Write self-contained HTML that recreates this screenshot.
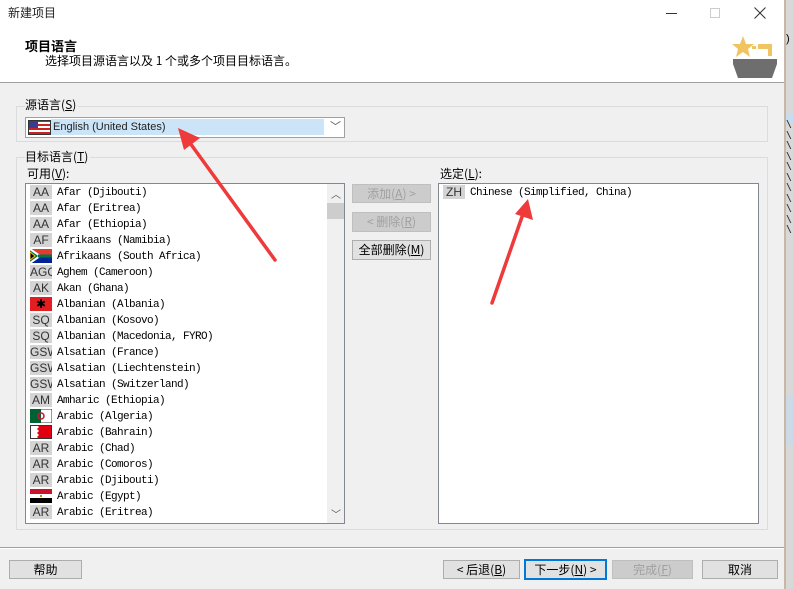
<!DOCTYPE html>
<html><head><meta charset="utf-8"><style>
*{margin:0;padding:0;box-sizing:border-box}
body{width:793px;height:589px;overflow:hidden;background:#f0f0f0;position:relative;font-family:"Liberation Sans","Noto Sans CJK SC",sans-serif;font-size:12px;color:#000}
.a{position:absolute}
.cjk{font-family:"Noto Sans CJK SC","WenQuanYi Zen Hei",sans-serif}
.btn{position:absolute;background:#e1e1e1;border:1px solid #adadad;text-align:center;font-size:12px;line-height:17px;font-family:"Noto Sans CJK SC",sans-serif}
.dis{color:#a0a0a0;background:#cccccc;border-color:#bfbfbf}
.row{position:absolute;left:3px;height:16px;width:300px}
.ic{position:absolute;left:1px;top:1px;width:22px;height:14px;background:#d4d4d4;color:#333;font:12px/15px "Liberation Sans",sans-serif;text-align:center;overflow:hidden;white-space:nowrap}
.tx{position:absolute;left:28px;top:1px;font:11px/16px "Liberation Mono",monospace;letter-spacing:-0.6px;white-space:nowrap}
.grp{position:absolute;border:1px solid #dcdcdc}
.lbl{background:#f0f0f0;padding-right:2px}
</style></head><body>
<div class="a" style="left:0;top:0;width:784px;height:82px;background:#fff"></div>
<div class="a" style="left:0;top:82px;width:784px;height:1px;background:#a0a0a0"></div>
<div class="a cjk" style="left:8px;top:4px;font-size:12px;color:#222">新建项目</div>
<div class="a" style="left:666px;top:13px;width:11px;height:1px;background:#333"></div>
<div class="a" style="left:710px;top:8px;width:10px;height:10px;border:1px solid #ccc"></div>
<svg class="a" style="left:754px;top:7px" width="12" height="12"><path d="M0.5 0.5L11.5 11.5M11.5 0.5L0.5 11.5" stroke="#333" stroke-width="1"/></svg>
<div class="a cjk" style="left:25px;top:36px;font-weight:bold;font-size:13px">项目语言</div>
<div class="a cjk" style="left:45px;top:52px;font-size:12px">选择项目源语言以及 1 个或多个项目目标语言。</div>
<svg class="a" style="left:732px;top:36px" width="46" height="44"><polygon points="11,0 14,8 22,8 16,13 18,21 11,16 4,21 6,13 0,8 8,8" fill="#f0c460"/><rect x="20" y="10" width="4" height="3" fill="#f0c460"/><path d="M26 8h14v12h-4v-7h-10z" fill="#f0c460"/><polygon points="1,23 45,23 45,28 40,42 6,42 1,28" fill="#6e6e6e"/></svg>
<div class="a" style="left:784px;top:0;width:9px;height:589px;background:#d8d8d8;border-left:2px solid #c9b7a6"></div>
<div class="a" style="left:786px;top:33px;font-size:11px">)</div>
<div class="a" style="left:786px;top:113px;width:7px;height:10px;background:#c8dcef"></div>
<div class="a" style="left:786px;top:120px;width:7px;height:115px;font:10px/10.5px monospace;color:#222">\<br>\<br>\<br>\<br>\<br>\<br>\<br>\<br>\<br>\<br>\</div>
<div class="a" style="left:786px;top:395px;width:7px;height:50px;background:#ccd9e6"></div>

<div class="grp" style="left:16px;top:106px;width:752px;height:36px"></div>
<div class="a cjk lbl" style="left:25px;top:96px">源语言(<u>S</u>)</div>
<div class="a" style="left:25px;top:117px;width:320px;height:21px;background:#fff;border:1px solid #a0a0a0"></div>
<div class="a" style="left:51px;top:119px;width:273px;height:16px;background:#cce4f7"></div>
<svg class="a" style="left:28px;top:120px" width="23" height="15"><rect width="23" height="15" fill="#fff"/><g fill="#c22"><rect y="0" width="23" height="2"/><rect y="4" width="23" height="2"/><rect y="8" width="23" height="2"/><rect y="12" width="23" height="2"/></g><rect width="10" height="8" fill="#3b3b8f"/><rect x=".5" y=".5" width="22" height="14" fill="none" stroke="#333"/></svg>
<div class="a" style="left:53px;top:120px;font-size:11px;line-height:14px;color:#222">English (United States)</div>
<div class="a" style="left:330px;top:118px;font-size:11px;color:#555">﹀</div>

<div class="grp" style="left:16px;top:157px;width:752px;height:373px"></div>
<div class="a cjk lbl" style="left:25px;top:148px">目标语言(<u>T</u>)</div>
<div class="a cjk" style="left:27px;top:165px">可用(<u>V</u>):</div>
<div class="a cjk" style="left:440px;top:165px">选定(<u>L</u>):</div>

<div class="a" style="left:25px;top:183px;width:320px;height:341px;background:#fff;border:1px solid #828790;overflow:hidden">
<div class="a" style="left:301px;top:0;width:17px;height:339px;background:#f0f0f0"></div>
<div class="a" style="left:301px;top:19px;width:17px;height:16px;background:#cdcdcd"></div>
<div class="a" style="left:305px;top:2px;font-size:10px;color:#555">︿</div>
<div class="a" style="left:305px;top:322px;font-size:10px;color:#555">﹀</div>
<div class="row" style="top:0"><div class="ic">AA</div><div class="tx">Afar (Djibouti)</div></div>
<div class="row" style="top:16px"><div class="ic">AA</div><div class="tx">Afar (Eritrea)</div></div>
<div class="row" style="top:32px"><div class="ic">AA</div><div class="tx">Afar (Ethiopia)</div></div>
<div class="row" style="top:48px"><div class="ic">AF</div><div class="tx">Afrikaans (Namibia)</div></div>
<div class="row" style="top:64px"><svg class="ic" style="background:none" width="22" height="14"><rect width="22" height="7" fill="#e03c31"/><rect y="7" width="22" height="7" fill="#002395"/><path d="M0 0L10 7L0 14" fill="#007749" stroke="#fff" stroke-width="2"/><path d="M0 3L5 7L0 11z" fill="#000" stroke="#ffb612" stroke-width="1"/><rect x="8" y="5.5" width="14" height="3" fill="#007749"/></svg><div class="tx">Afrikaans (South Africa)</div></div>
<div class="row" style="top:80px"><div class="ic">AGQ</div><div class="tx">Aghem (Cameroon)</div></div>
<div class="row" style="top:96px"><div class="ic">AK</div><div class="tx">Akan (Ghana)</div></div>
<div class="row" style="top:112px"><div class="ic" style="background:#e41e20;color:#000">✱</div><div class="tx">Albanian (Albania)</div></div>
<div class="row" style="top:128px"><div class="ic">SQ</div><div class="tx">Albanian (Kosovo)</div></div>
<div class="row" style="top:144px"><div class="ic">SQ</div><div class="tx">Albanian (Macedonia, FYRO)</div></div>
<div class="row" style="top:160px"><div class="ic">GSW</div><div class="tx">Alsatian (France)</div></div>
<div class="row" style="top:176px"><div class="ic">GSW</div><div class="tx">Alsatian (Liechtenstein)</div></div>
<div class="row" style="top:192px"><div class="ic">GSW</div><div class="tx">Alsatian (Switzerland)</div></div>
<div class="row" style="top:208px"><div class="ic">AM</div><div class="tx">Amharic (Ethiopia)</div></div>
<div class="row" style="top:224px"><svg class="ic" style="background:none" width="22" height="14"><rect width="22" height="14" fill="#fff" stroke="#333"/><rect width="11" height="14" fill="#006233"/><circle cx="11" cy="7" r="3" fill="none" stroke="#d21034" stroke-width="1.5"/></svg><div class="tx">Arabic (Algeria)</div></div>
<div class="row" style="top:240px"><svg class="ic" style="background:none" width="22" height="14"><rect width="22" height="14" fill="#e10011"/><path d="M0 0H7L9 2L7 4L9 6L7 8L9 10L7 12L9 14H0z" fill="#fff"/><rect x=".5" y=".5" width="21" height="13" fill="none" stroke="#333"/></svg><div class="tx">Arabic (Bahrain)</div></div>
<div class="row" style="top:256px"><div class="ic">AR</div><div class="tx">Arabic (Chad)</div></div>
<div class="row" style="top:272px"><div class="ic">AR</div><div class="tx">Arabic (Comoros)</div></div>
<div class="row" style="top:288px"><div class="ic">AR</div><div class="tx">Arabic (Djibouti)</div></div>
<div class="row" style="top:304px"><svg class="ic" style="background:none" width="22" height="14"><rect width="22" height="5" fill="#ce1126"/><rect y="5" width="22" height="4" fill="#fff"/><rect y="9" width="22" height="5" fill="#000"/><rect x="10" y="6" width="2" height="2" fill="#c09300"/></svg><div class="tx">Arabic (Egypt)</div></div>
<div class="row" style="top:320px"><div class="ic">AR</div><div class="tx">Arabic (Eritrea)</div></div>
</div>

<div class="btn dis" style="left:352px;top:184px;width:79px;height:19px">添加(<u>A</u>) &gt;</div>
<div class="btn dis" style="left:352px;top:212px;width:79px;height:20px">&lt; 删除(<u>R</u>)</div>
<div class="btn" style="left:352px;top:240px;width:79px;height:20px">全部删除(<u>M</u>)</div>

<div class="a" style="left:438px;top:183px;width:321px;height:341px;background:#fff;border:1px solid #828790">
<div class="row" style="top:0"><div class="ic">ZH</div><div class="tx">Chinese (Simplified, China)</div></div>
</div>

<div class="a" style="left:0;top:547px;width:784px;height:1px;background:#a0a0a0"></div>
<div class="a" style="left:0;top:548px;width:784px;height:1px;background:#fff"></div>
<div class="btn" style="left:9px;top:560px;width:73px;height:19px">帮助</div>
<div class="btn" style="left:443px;top:560px;width:77px;height:19px">&lt; 后退(<u>B</u>)</div>
<div class="btn" style="left:524px;top:559px;width:83px;height:21px;border:2px solid #0078d7;line-height:17px">下一步(<u>N</u>) &gt;</div>
<div class="btn dis" style="left:612px;top:560px;width:81px;height:19px">完成(<u>F</u>)</div>
<div class="btn" style="left:702px;top:560px;width:76px;height:19px">取消</div>

<svg class="a" style="left:0;top:0" width="793" height="589">
<line x1="275" y1="260" x2="190" y2="143" stroke="#ee3a3a" stroke-width="3.5" stroke-linecap="round"/>
<polygon points="178,128 200,138 184,150" fill="#ee3a3a"/>
<line x1="492" y1="303" x2="523" y2="214" stroke="#ee3a3a" stroke-width="3.5" stroke-linecap="round"/>
<polygon points="528,199 533,220 515,214" fill="#ee3a3a"/>
</svg>
</body></html>
